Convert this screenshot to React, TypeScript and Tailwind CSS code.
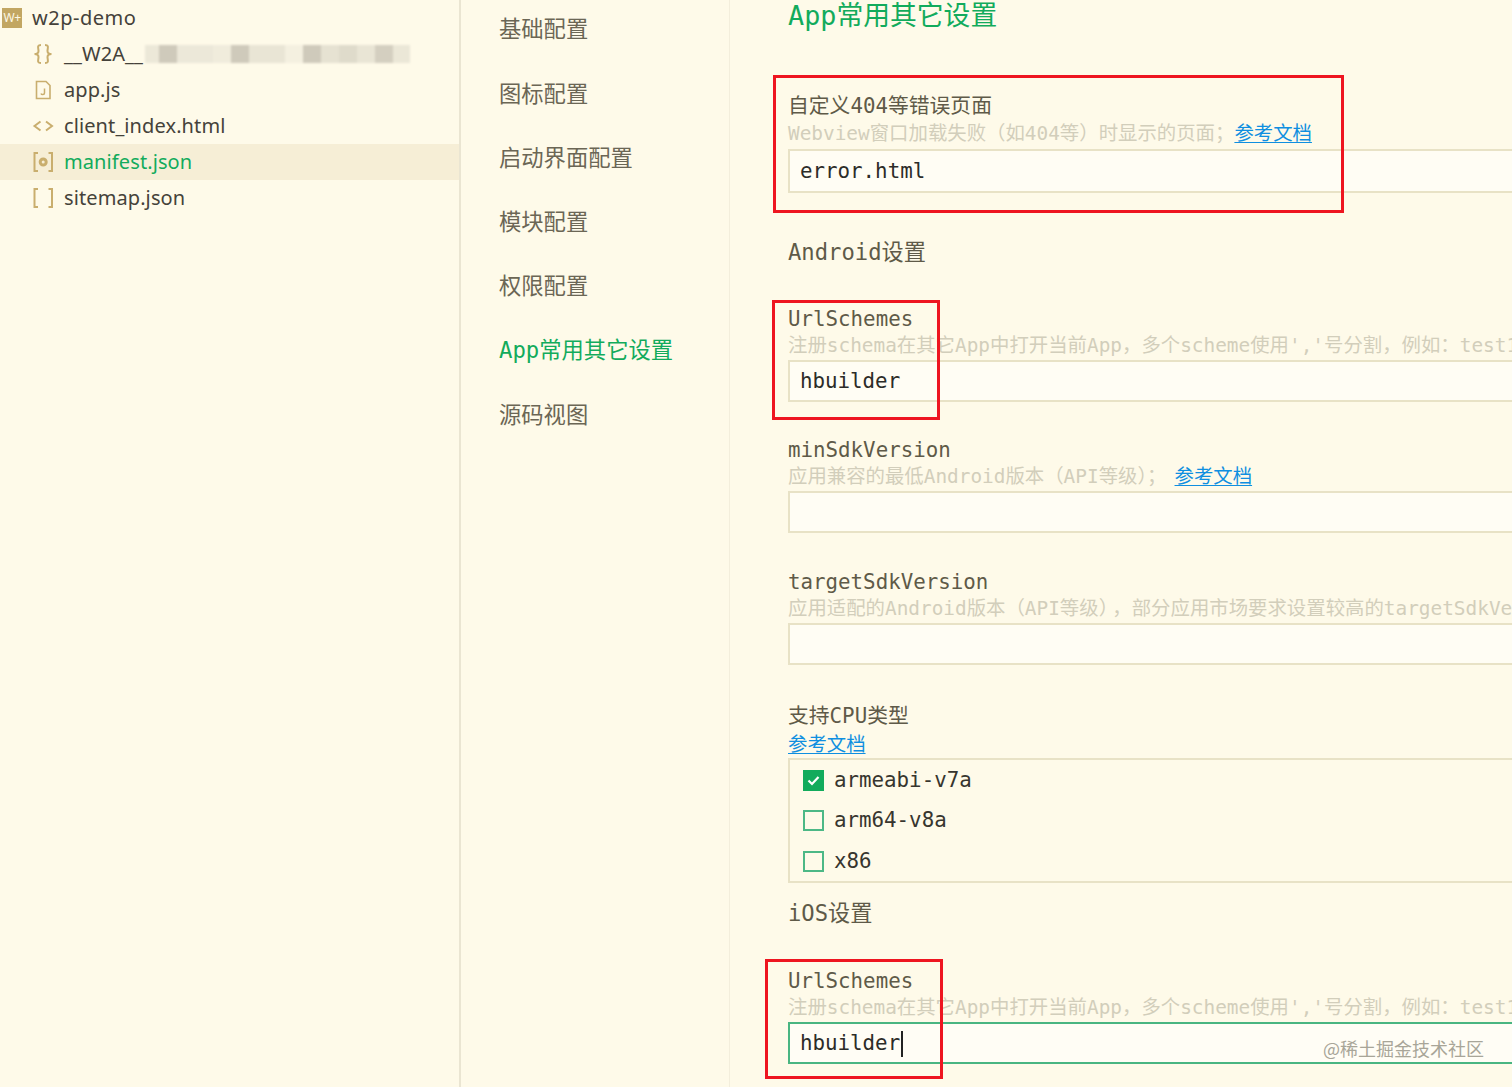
import React from "react";

const mono = "font-['DejaVu_Sans_Mono','Noto_Sans_CJK_SC',monospace]";
const GOLD = "#c9ae6e";

function Ic({ children }: { children: React.ReactNode }) {
  return (
    <svg width="22" height="24" viewBox="0 0 22 24" fill="none" stroke={GOLD} strokeWidth="2" className="shrink-0">
      {children}
    </svg>
  );
}

function Row({ icon, name, active, children }: { icon: React.ReactNode; name: string; active?: boolean; children?: React.ReactNode }) {
  return (
    <div className={`flex h-9 items-center pl-[32px] ${active ? "bg-[#f6eed6]" : ""}`}>
      <div className="w-[32px]">{icon}</div>
      <span className={`pb-[1px] text-[20px] tracking-[0.1px] ${active ? "text-[#12ab5c]" : "text-[#45423a]"}`}>{name}</span>
      {children}
    </div>
  );
}

const blur: [number, string][] = [
  [14, "#ece8d8"], [18, "#cfcabb"], [36, "#ece8d9"], [18, "#f0ecdc"], [18, "#cfcabb"], [36, "#e9e5d5"], [18, "#f4f0e0"], [18, "#cfcabb"], [18, "#e6e2d2"], [18, "#dfdbcb"], [18, "#e9e5d5"], [18, "#d4cfc0"], [17, "#ebe7d7"],
];

function Sidebar() {
  return (
    <div className="w-[461px] shrink-0 border-r-2 border-[#eae5d2] font-['Noto_Sans','Open_Sans',sans-serif]">
      <div className="flex h-9 items-center pl-[2px]">
        <div className="flex h-[20px] w-[20px] items-center justify-center bg-[#c2a662] text-[12px] leading-none tracking-[-0.5px] text-[#fdf8e6]">W+</div>
        <span className="ml-[10px] pb-[1px] text-[20px] tracking-[0.5px] text-[#45423a]">w2p-demo</span>
      </div>
      <Row
        name="__W2A__"
        icon={
          <Ic>
            <path d="M9 3C4.500 3 6.500 6 6.500 9C6.500 11 5 12 2.500 12C5 12 6.500 13 6.500 15C6.500 18 4.500 21 9 21" />
            <path d="M13 3C17.500 3 15.500 6 15.500 9C15.500 11 17 12 19.500 12C17 12 15.500 13 15.500 15C15.500 18 17.500 21 13 21" />
          </Ic>
        }
      >
        <div className="ml-[2px] flex h-[18px] items-stretch blur-[1px]">
          {blur.map(([w, c], i) => (
            <div key={i} className="h-full" style={{ width: w, background: c }} />
          ))}
        </div>
      </Row>
      <Row
        name="app.js"
        icon={
          <Ic>
            <path d="M4.500 3.500H14L18 7.500V20.500H4.500Z" strokeWidth="1.600" />
            <path d="M12.500 10.500V15C12.500 17 9.500 17 9 15.500" strokeWidth="1.500" />
          </Ic>
        }
      />
      <Row
        name="client_index.html"
        icon={
          <Ic>
            <path d="M8.500 7.500L2.500 12L8.500 16.500" />
            <path d="M14 7.500L20 12L14 16.500" />
          </Ic>
        }
      />
      <Row
        active
        name="manifest.json"
        icon={
          <Ic>
            <path d="M6 3H2.500V21H6" />
            <path d="M16.500 3H20V21H16.500" />
            <circle cx="11.200" cy="12" r="3" strokeWidth="3" />
          </Ic>
        }
      />
      <Row
        name="sitemap.json"
        icon={
          <Ic>
            <path d="M6 3H2.500V21H6" />
            <path d="M16.500 3H20V21H16.500" />
          </Ic>
        }
      />
    </div>
  );
}

function Nav() {
  const items = ["基础配置", "图标配置", "启动界面配置", "模块配置", "权限配置", "App常用其它设置", "源码视图"];
  return (
    <div className={`w-[269px] shrink-0 border-r border-[#f3eedc] pl-[38px] ${mono}`}>
      <div className="-mt-[2px]">
        {items.map((t) => (
          <div key={t} className={`flex h-[64.2px] items-center text-[22.300px] ${t.startsWith("App") ? "text-[#12ab5c]" : "text-[#6b6655]"}`}>
            {t}
          </div>
        ))}
      </div>
    </div>
  );
}

function Doc() {
  return <a className="text-[#0f8fe0] underline underline-offset-2">参考文档</a>;
}

function Label({ children }: { children: React.ReactNode }) {
  return <div className="h-[26px] pt-[1px] text-[20.800px] leading-[26px] text-[#5f5a48]">{children}</div>;
}

function Hint({ children, cls }: { children: React.ReactNode; cls?: string }) {
  return <div className={`whitespace-nowrap text-[19.400px] text-[#d2cebb] ${cls ?? "h-[29px] leading-[29px]"}`}>{children}</div>;
}

function Input({ value, focus, cls }: { value?: string; focus?: boolean; cls?: string }) {
  return (
    <div
      className={`flex items-center border-y-2 border-l-2 pl-[10px] pt-[1px] text-[20.800px] text-[#2c2c28] ${cls ?? "h-[42px]"} ${
        focus ? "border-[#49b581] bg-[#fffdf5]" : "border-[#e8e2c6] bg-[#fffdf4]"
      }`}
    >
      {value}
      {focus && <span className="ml-[1px] h-[26px] w-[2px] bg-[#222]" />}
    </div>
  );
}

function Check({ on, label }: { on?: boolean; label: string }) {
  return (
    <div className="flex h-[40.500px] items-center pl-[13px]">
      <div className={`flex h-[21px] w-[21px] items-center justify-center ${on ? "bg-[#12ab5c]" : "border-2 border-[#4cb886]"}`}>
        {on && (
          <svg width="13" height="11" viewBox="0 0 13 11" fill="none" stroke="#fff" strokeWidth="2.200">
            <path d="M1.500 5.500L5 9L11.500 2" />
          </svg>
        )}
      </div>
      <span className="ml-[10px] text-[20.800px] text-[#37352e]">{label}</span>
    </div>
  );
}

function Content() {
  return (
    <div className={`min-w-0 flex-1 overflow-hidden pl-[58px] ${mono}`}>
      <div className="h-[32px] text-[26.800px] leading-[32px] text-[#12ab5c]">App常用其它设置</div>

      <div className="mt-[60px]">
        <Label>自定义404等错误页面</Label>
        <Hint cls="h-[31px] leading-[31px]">
          Webview窗口加载失败（如404等）时显示的页面；<Doc />
        </Hint>
        <Input value="error.html" cls="h-[44px]" />
      </div>

      <div className="mt-[43px] h-[32px] text-[22.200px] leading-[32px] text-[#5f5a48]">Android设置</div>

      <div className="mt-[37px]">
        <Label>UrlSchemes</Label>
        <Hint>注册schema在其它App中打开当前App，多个scheme使用','号分割，例如：test1,test2</Hint>
        <Input value="hbuilder" />
      </div>

      <div className="mt-[34px]">
        <Label>minSdkVersion</Label>
        <Hint>
          应用兼容的最低Android版本（API等级）；<span className="ml-[8px]"><Doc /></span>
        </Hint>
        <Input />
      </div>

      <div className="mt-[35px]">
        <Label>targetSdkVersion</Label>
        <Hint>
          应用适配的Android版本（API等级）<span className="ml-[4px]">，部分应用市场要求设置较高的targetSdkVersion</span>
        </Hint>
        <Input />
      </div>

      <div className="mt-[37px]">
        <Label>支持CPU类型</Label>
        <div className="h-[30px] text-[19.400px] leading-[33px]">
          <Doc />
        </div>
        <div className="h-[125px] border-y-2 border-l-2 border-[#e8e2c6]">
          <Check on label="armeabi-v7a" />
          <Check label="arm64-v8a" />
          <Check label="x86" />
        </div>
      </div>

      <div className="mt-[14px] h-[32px] text-[22.200px] leading-[32px] text-[#5f5a48]">iOS设置</div>

      <div className="mt-[38px]">
        <Label>UrlSchemes</Label>
        <Hint>注册schema在其它App中打开当前App，多个scheme使用','号分割，例如：test1,test2</Hint>
        <Input value="hbuilder" focus />
      </div>
    </div>
  );
}

export default function App() {
  return (
    <div className="relative flex h-[1087px] w-[1512px] overflow-hidden bg-[#fefae9]">
      <Sidebar />
      <Nav />
      <Content />
      <div className="absolute left-[773px] top-[75px] h-[138px] w-[571px] border-[3px] border-[#ee1520]" />
      <div className="absolute left-[772px] top-[300px] h-[120px] w-[168px] border-[3px] border-[#ee1520]" />
      <div className="absolute left-[765px] top-[959px] h-[120px] w-[178px] border-[3px] border-[#ee1520]" />
      <div className="absolute left-[1323px] top-[1036px] font-['Noto_Sans_CJK_SC',sans-serif] text-[18px] leading-[24px] text-[#a8a598]">
        @稀土掘金技术社区
      </div>
    </div>
  );
}
